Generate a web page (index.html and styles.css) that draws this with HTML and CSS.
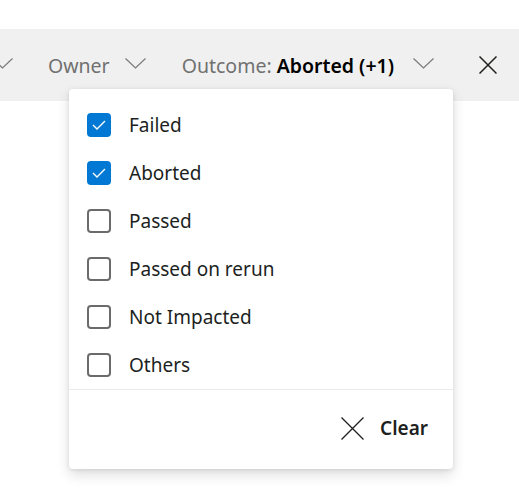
FILE: index.html
```html
<!DOCTYPE html>
<html>
<head>
<meta charset="utf-8">
<link rel="stylesheet" href="styles.css">
</head>
<body>
<div class="top"></div>
<div class="bar">
  <svg class="chev first" width="21" height="11" viewBox="0 0 21 11"><path d="M0.5 0.5 L10.5 10 L20.5 0.5" fill="none" stroke="#7a7a7a" stroke-width="1.2"/></svg>
  <span class="label">Owner</span>
  <svg class="chev" width="21" height="11" viewBox="0 0 21 11"><path d="M0.5 0.5 L10.5 10 L20.5 0.5" fill="none" stroke="#7a7a7a" stroke-width="1.2"/></svg>
  <span class="label outcome">Outcome: <b>Aborted (+1)</b></span>
  <svg class="chev" width="21" height="11" viewBox="0 0 21 11"><path d="M0.5 0.5 L10.5 10 L20.5 0.5" fill="none" stroke="#7a7a7a" stroke-width="1.2"/></svg>
  <svg class="close" width="18" height="18" viewBox="0 0 18 18"><path d="M0.5 0.5 L17.5 17.5 M17.5 0.5 L0.5 17.5" fill="none" stroke="#201f1e" stroke-width="1.5"/></svg>
</div>
<div class="popup">
  <ul class="list">
    <li class="row"><span class="box checked"><svg width="14" height="10" viewBox="0 0 14 10"><path d="M1 5 L5 9 L13 1" fill="none" stroke="#fff" stroke-width="1.4"/></svg></span>Failed</li>
    <li class="row"><span class="box checked"><svg width="14" height="10" viewBox="0 0 14 10"><path d="M1 5 L5 9 L13 1" fill="none" stroke="#fff" stroke-width="1.4"/></svg></span>Aborted</li>
    <li class="row"><span class="box"></span>Passed</li>
    <li class="row"><span class="box"></span>Passed on rerun</li>
    <li class="row"><span class="box"></span>Not Impacted</li>
    <li class="row"><span class="box"></span>Others</li>
  </ul>
  <div class="footer">
    <svg width="23" height="23" viewBox="0 0 23 23"><path d="M0.5 0.5 L22.5 22.5 M22.5 0.5 L0.5 22.5" fill="none" stroke="#201f1e" stroke-width="1.3"/></svg>
    <span class="clear">Clear</span>
  </div>
</div>
</body>
</html>
```
FILE: styles.css
```css
html, body {
  margin: 0;
  padding: 0;
  background: #fff;
  font-family: "Noto Sans", "Open Sans", sans-serif;
  width: 519px;
  height: 493px;
  overflow: hidden;
}
.top {
  height: 29px;
}
.bar {
  height: 72px;
  background: #f0f0f0;
  display: flex;
  align-items: center;
  white-space: nowrap;
}
.label {
  font-size: 19.5px;
  color: #707070;
  line-height: 1;
  padding-top: 2px;
}
.label b {
  color: #000;
  font-weight: 600;
}
.chev {
  flex: none;
  margin-top: -3px;
}
.chev.first {
  margin-left: -8px;
  margin-right: 35px;
}
.label + .chev {
  margin-left: 15px;
  margin-right: 36px;
}
.outcome + .chev {
  margin-left: 19px;
  margin-right: 45px;
}
.close {
  flex: none;
}
.popup {
  position: absolute;
  left: 69px;
  top: 89px;
  width: 384px;
  height: 380px;
  background: #fff;
  border-radius: 4px;
  box-shadow: 0 6px 14px rgba(0,0,0,0.13), 0 1px 4px rgba(0,0,0,0.1);
  display: flex;
  flex-direction: column;
}
.list {
  list-style: none;
  margin: 0;
  padding: 12px 0 0;
  border-bottom: 1px solid #edebe9;
}
.row {
  height: 48px;
  display: flex;
  align-items: center;
  padding-left: 18px;
  font-size: 19px;
  color: #201f1e;
}
.box {
  width: 24px;
  height: 24px;
  box-sizing: border-box;
  border: 2px solid #6b6b6b;
  border-radius: 4px;
  margin-right: 18px;
  display: flex;
  align-items: center;
  justify-content: center;
  flex: none;
}
.box.checked {
  background: #0078d4;
  border-color: #0078d4;
}
.footer {
  flex: 1;
  display: flex;
  align-items: center;
  justify-content: flex-end;
  padding-right: 25px;
  padding-bottom: 3px;
  gap: 16px;
}
.clear {
  font-size: 19px;
  font-weight: 600;
  color: #201f1e;
}
```
